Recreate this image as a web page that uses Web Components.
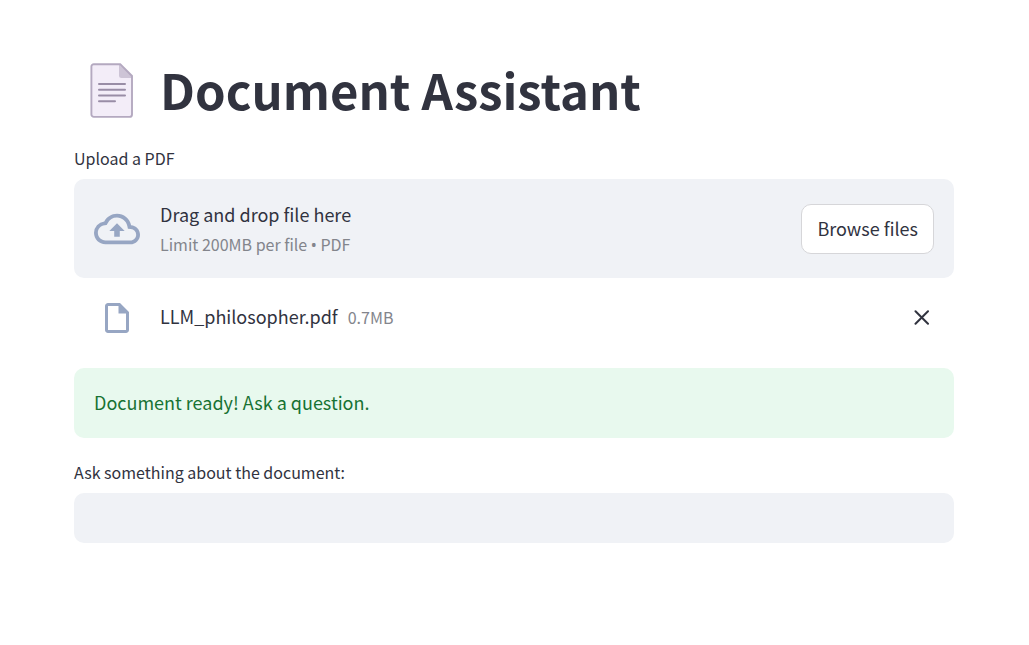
<!DOCTYPE html>
<html lang="en">
<head>
<meta charset="utf-8">
<meta name="viewport" content="width=device-width, initial-scale=1">
<title>Document Assistant</title>
<style>
  :root {
    --text: #31333f;
    --muted: #83858c;
    --panel: #f0f2f6;
    --icon: #97a6c3;
    --radius: 10px;
  }
  body {
    margin: 0;
    background: #fff;
    color: var(--text);
    font: 18px/30px "Source Sans Pro", "Noto Sans CJK SC", "Noto Sans", sans-serif;
  }
</style>
</head>
<body>
<doc-app></doc-app>
<script>
const define = (name, html, setup) => {
  const template = document.createElement('template');
  template.innerHTML = html;
  customElements.define(name, class extends HTMLElement {
    constructor() {
      super();
      this.attachShadow({ mode: 'open' }).append(template.content.cloneNode(true));
      if (setup) setup(this.shadowRoot, this);
    }
  });
};

define('page-title', `
  <style>
    :host { display: block; }
    h1 { display: flex; align-items: flex-start; gap: 10px; margin: 0; font-size: 49px; line-height: 60px; font-weight: 700; }
    svg { flex: none; width: 76px; height: 66px; }
  </style>
  <h1>
    <svg viewBox="0 0 76 66" fill="none" aria-hidden="true">
      <path d="M19 5.2h27.200L58 17v38.500a2.400 2.400 0 0 1-2.400 2.400H19.800a2.400 2.400 0 0 1-2.400-2.400V7.200a2 2 0 0 1 2-2z" fill="#f3edf8"/>
      <path d="M45 5v11.500a2.500 2.500 0 0 0 2.500 2.500H58v-2L46.500 5z" fill="#cdc4d6"/>
      <path d="M19.800 5.200h26.400L58 17v38.500a2.400 2.400 0 0 1-2.400 2.400H19.800a2.400 2.400 0 0 1-2.400-2.400V7.600a2.400 2.400 0 0 1 2.400-2.400z" stroke="#b4a9c0" stroke-width="1.900"/>
      <path d="M25 25h26M25 30.700h26M25 36.500h26M25 42.300h16" stroke="#998da6" stroke-width="2" stroke-linecap="round"/>
    </svg>
    <slot></slot>
  </h1>`);

define('file-dropzone', `
  <style>
    :host { display: block; }
    label { display: block; font-size: 16px; line-height: 28px; }
    input { display: none; }
    .zone { display: flex; align-items: center; gap: 20px; padding: 20px 20px 19px; margin-top: 7px; background: var(--panel); border-radius: var(--radius); }
    svg { flex: none; width: 46px; height: 46px; fill: var(--icon); }
    .text { flex: 1; min-width: 0; }
    .hint { color: var(--muted); font-size: 16px; }
    .dot { font-family: "Noto Sans", sans-serif; line-height: 1; }
    button { height: 50px; padding: 0 15px 2px; border: 1px solid #d6d6d9; border-radius: var(--radius); background: #fff; color: inherit; font: inherit; white-space: nowrap; cursor: pointer; }
  </style>
  <label for="file">Upload a PDF</label>
  <input id="file" type="file" accept=".pdf">
  <div class="zone">
    <svg viewBox="0 0 24 24" aria-hidden="true"><path d="M19.350 10.040A7.490 7.490 0 0012 4C9.110 4 6.600 5.640 5.350 8.040A5.994 5.994 0 000 14c0 3.310 2.690 6 6 6h13c2.760 0 5-2.240 5-5 0-2.640-2.050-4.780-4.650-4.960zM19 18H6c-2.210 0-4-1.790-4-4 0-2.050 1.530-3.760 3.560-3.970l1.070-.11.5-.95A5.469 5.469 0 0112 6c2.620 0 4.880 1.860 5.390 4.430l.3 1.500 1.530.11A2.980 2.980 0 0122 15c0 1.650-1.350 3-3 3zM8 13h2.550v3h2.900v-3H16l-4-4-4 4z"/></svg>
    <div class="text">
      <div>Drag and drop file here</div>
      <div class="hint">Limit 200MB per file <span class="dot">•</span> PDF</div>
    </div>
    <button type="button">Browse files</button>
  </div>`, root => {
    root.querySelector('button').addEventListener('click', () => root.getElementById('file').click());
  });

define('uploaded-file', `
  <style>
    :host { display: flex; align-items: center; gap: 20px; padding: 0 20px; }
    .icon { display: flex; justify-content: center; flex: none; width: 46px; }
    .icon svg { width: 36px; height: 36px; fill: var(--icon); }
    .info { display: flex; align-items: baseline; flex: 1; gap: 10px; min-width: 0; padding-bottom: 4px; }
    .size { color: var(--muted); font-size: 16px; }
    button { display: flex; align-items: center; justify-content: center; width: 25px; height: 40px; padding: 0; border: 0; background: none; color: inherit; cursor: pointer; }
    button svg { width: 16px; height: 16px; }
  </style>
  <span class="icon"><svg viewBox="0 0 24 24" aria-hidden="true"><path d="M14 2H6c-1.100 0-1.990.9-1.990 2L4 20c0 1.100.89 2 1.990 2H18c1.100 0 2-.9 2-2V8l-6-6zM6 20V4h7v5h5v11H6z"/></svg></span>
  <div class="info"><span><slot></slot></span><span class="size"><slot name="size"></slot></span></div>
  <button type="button" aria-label="Remove file"><svg viewBox="0 0 16 16" aria-hidden="true"><path d="M1.500 1.200l12.500 12.600M14 1.200L1.500 13.800" stroke="currentColor" stroke-width="2" stroke-linecap="round"/></svg></button>`);

define('success-alert', `
  <style>
    :host { display: block; padding: 19px 20px 21px; border-radius: var(--radius); background: #e8f9ee; color: #177233; }
  </style>
  <slot></slot>`);

define('text-field', `
  <style>
    :host { display: block; }
    label { display: block; font-size: 16px; line-height: 28px; }
    input { display: block; box-sizing: border-box; width: 100%; height: 50px; margin-top: 7px; padding: 0 12px; border: 0; border-radius: var(--radius); background: var(--panel); color: inherit; font: inherit; }
  </style>
  <label for="field"><slot></slot></label>
  <input id="field" type="text">`);

define('doc-app', `
  <style>
    :host { display: block; }
    main { padding: 59px 75px 40px 74px; }
    file-dropzone { margin-top: 19px; }
    uploaded-file { margin-top: 20px; }
    success-alert { margin-top: 30px; }
    text-field { margin-top: 20px; }
  </style>
  <main>
    <page-title>Document Assistant</page-title>
    <file-dropzone></file-dropzone>
    <uploaded-file>LLM_philosopher.pdf<span slot="size">0.7MB</span></uploaded-file>
    <success-alert role="status">Document ready! Ask a question.</success-alert>
    <text-field>Ask something about the document:</text-field>
  </main>`);
</script>
</body>
</html>
